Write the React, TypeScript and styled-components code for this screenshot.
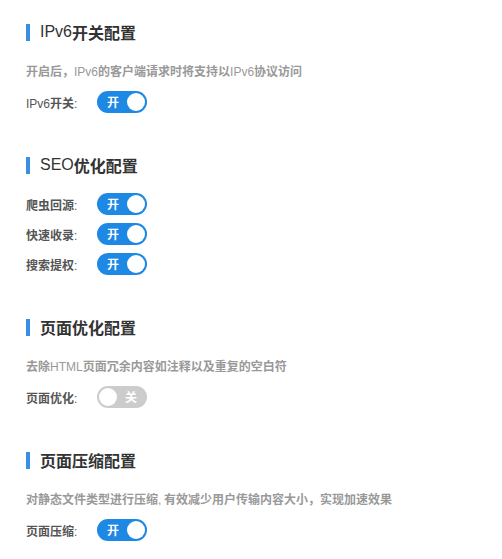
import styled, { createGlobalStyle } from 'styled-components'
import { useState } from 'react'

const GlobalStyle = createGlobalStyle`
    body {
        margin: 0;
        background: #fff;
        font-family: "Noto Sans CJK SC", "Liberation Sans", sans-serif;
    }
`;

const Page = styled.div`
    padding: 20px 26px 0;
`;

const Section = styled.section`
    margin-bottom: 36px;
    &:last-child {
        margin-bottom: 0;
    }
`;

const Title = styled.h2`
    display: flex;
    align-items: center;
    height: 24px;
    margin: 0 0 12px;
    font-size: 16px;
    font-weight: 700;
    color: #333;
    &::before {
        content: '';
        width: 4px;
        height: 17px;
        background: #3a8ee6;
        margin-right: 10px;
    }
`;

const Latin = styled.span`
    font-family: "Liberation Sans", "Noto Sans", sans-serif;
    font-weight: 400;
`;

const Desc = styled.p`
    margin: 0;
    line-height: 30px;
    font-size: 12px;
    font-weight: 700;
    color: #999;
`;

const Row = styled.div`
    display: flex;
    align-items: center;
    height: 30px;
`;

const Label = styled.span`
    width: 71px;
    font-size: 12px;
    font-weight: 700;
    color: #555;
`;

const Switch = styled.button<{ $on: boolean }>`
    position: relative;
    width: 50px;
    height: 22px;
    padding: 0;
    border: none;
    border-radius: 11px;
    background: ${(p) => (p.$on ? '#1e88e5' : '#cccccc')};
    color: #fff;
    font-family: "Noto Sans CJK SC", sans-serif;
    font-size: 12px;
    font-weight: 700;
    cursor: pointer;
    span {
        position: absolute;
        top: 0;
        line-height: 22px;
        ${(p) => (p.$on ? 'left: 10px;' : 'right: 10px;')}
    }
    &::after {
        content: '';
        position: absolute;
        top: 2px;
        width: 18px;
        height: 18px;
        border-radius: 50%;
        background: #fff;
        ${(p) => (p.$on ? 'right: 2px;' : 'left: 2px;')}
    }
`;

const Toggle = ({ initial }: { initial: boolean }) => {
    const [on, setOn] = useState(initial);
    return (
        <Switch $on={on} onClick={() => setOn(!on)}>
            <span>{on ? '开' : '关'}</span>
        </Switch>
    );
};

const App = () => (
    <>
        <GlobalStyle />
        <Page>
            <Section>
                <Title><Latin>IPv6</Latin>开关配置</Title>
                <Desc>开启后，<Latin>IPv6</Latin>的客户端请求时将支持以<Latin>IPv6</Latin>协议访问</Desc>
                <Row>
                    <Label><Latin>IPv6</Latin>开关<Latin>:</Latin></Label>
                    <Toggle initial={true} />
                </Row>
            </Section>
            <Section>
                <Title><Latin>SEO</Latin>优化配置</Title>
                {['爬虫回源', '快速收录', '搜索提权'].map((name) => (
                    <Row key={name}>
                        <Label>{name}<Latin>:</Latin></Label>
                        <Toggle initial={true} />
                    </Row>
                ))}
            </Section>
            <Section>
                <Title>页面优化配置</Title>
                <Desc>去除<Latin>HTML</Latin>页面冗余内容如注释以及重复的空白符</Desc>
                <Row>
                    <Label>页面优化<Latin>:</Latin></Label>
                    <Toggle initial={false} />
                </Row>
            </Section>
            <Section>
                <Title>页面压缩配置</Title>
                <Desc>对静态文件类型进行压缩<Latin>,</Latin> 有效减少用户传输内容大小，实现加速效果</Desc>
                <Row>
                    <Label>页面压缩<Latin>:</Latin></Label>
                    <Toggle initial={true} />
                </Row>
            </Section>
        </Page>
    </>
);

export default App;
